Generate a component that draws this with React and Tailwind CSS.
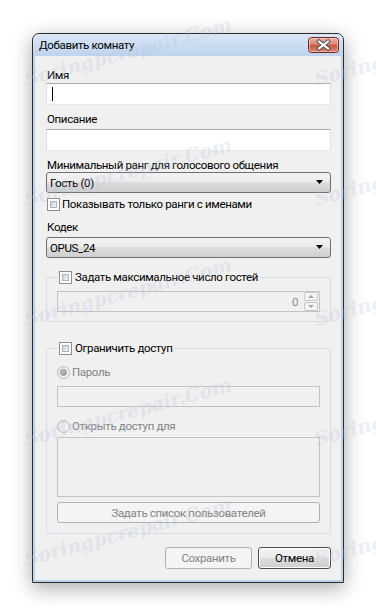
import React from "react";

function TextBox({ className = "", children }) {
  return (
    <div
      className={
        "border border-t-[#abadb3] border-x-[#dbdfe6] border-b-[#e3e9ef] bg-white " +
        className
      }
    >
      {children}
    </div>
  );
}

function Arrow() {
  return (
    <svg width="8" height="5" viewBox="0 0 8 5">
      <path d="M0 0 H7 L3.5 4 Z" fill="#000" />
    </svg>
  );
}

function Combo({ value }) {
  return (
    <div className="relative flex h-[21px] w-[285px] items-center justify-between rounded-[3px] border border-[#707070] bg-[linear-gradient(#f2f2f2_0%,#ebebeb_50%,#dddddd_50%,#cfcfcf_100%)] pl-[3px] pr-[6px]">
      <span>{value}</span>
      <Arrow />
    </div>
  );
}

function CheckBox() {
  return (
    <div className="h-[13px] w-[13px] shrink-0 border border-[#8f8f8f] bg-white p-[2px]">
      <div className="h-full w-full border border-[#aeb3b9] bg-gradient-to-br from-[#cbcfd5] to-[#f6f6f6]" />
    </div>
  );
}

function Radio({ checked }) {
  return (
    <div className="flex h-[13px] w-[13px] shrink-0 items-center justify-center rounded-full border border-[#b8b8b8] bg-gradient-to-br from-[#e4e4e4] to-[#f8f8f8]">
      {checked && (
        <div className="h-[7px] w-[7px] rounded-full border border-[#8c8c8c] bg-gradient-to-br from-[#c9c9c9] to-[#9a9a9a]" />
      )}
    </div>
  );
}

function CloseButton() {
  return (
    <svg width="31" height="16" viewBox="0 0 31 16">
      <defs>
        <linearGradient id="cg" x1="0" y1="0" x2="0" y2="1">
          <stop offset="0" stopColor="#eab3a6" />
          <stop offset="0.45" stopColor="#d98a78" />
          <stop offset="0.5" stopColor="#c6553d" />
          <stop offset="1" stopColor="#d98a76" />
        </linearGradient>
      </defs>
      <rect x="0.5" y="0.5" width="30" height="15" rx="3" fill="url(#cg)" stroke="#6d2a22" />
      <rect x="1.5" y="1.5" width="28" height="13" rx="2" fill="none" stroke="#f3c9bf" strokeOpacity="0.7" />
      <path d="M11 4.5 L20 11.5 M20 4.5 L11 11.5" stroke="#4a4a4a" strokeWidth="4" strokeLinecap="square" />
      <path d="M11 4.5 L20 11.5 M20 4.5 L11 11.5" stroke="#ffffff" strokeWidth="2.2" strokeLinecap="square" />
    </svg>
  );
}

function Spin() {
  return (
    <div className="flex flex-col gap-[1px] pr-[1px]">
      <div className="flex h-[9px] w-[14px] items-center justify-center rounded-[2px] border border-[#c6c6c6] bg-[#f4f4f4]">
        <svg width="6" height="3" viewBox="0 0 6 3"><path d="M0 3 H6 L3 0 Z" fill="#a8a8a8" /></svg>
      </div>
      <div className="flex h-[9px] w-[14px] items-center justify-center rounded-[2px] border border-[#c6c6c6] bg-[#f4f4f4]">
        <svg width="6" height="3" viewBox="0 0 6 3"><path d="M0 0 H6 L3 3 Z" fill="#a8a8a8" /></svg>
      </div>
    </div>
  );
}

const marks = [62, 182, 302, 422, 542];

export default function App() {
  return (
    <div className="relative min-h-[615px] w-[376px] overflow-hidden bg-white font-['Roboto',Arial,sans-serif] text-[11.5px] leading-[14px] tracking-[-0.35px] text-black">
      <div className="pl-[32px] pt-[33px]">
        <div className="flex h-[550px] w-[312px] flex-col rounded-t-[7px] rounded-b-[1px] border border-[#2c2c2c] bg-[#bcd3ee] shadow-[0_5px_20px_rgba(0,0,0,0.35)]">
          {/* title bar */}
          <div className="flex h-[22px] items-start justify-between rounded-t-[6px] bg-gradient-to-b from-[#dbe7f5] to-[#bdd3ed] pl-[6px] pr-[4px]">
            <span className="pt-[4px]">Добавить комнату</span>
            <div className="pt-[3px]">
              <CloseButton />
            </div>
          </div>

          {/* content */}
          <div className="mx-[2px] mb-[2px] flex flex-1 flex-col bg-[#f0f0f0] pl-[11px]">
            <div className="mt-[12px] pl-[1px]">Имя</div>
            <TextBox className="mt-[1px] flex h-[22px] w-[285px] items-center pl-[5px]">
              <div className="h-[14px] w-[1px] bg-black" />
            </TextBox>

            <div className="mt-[7px] pl-[1px]">Описание</div>
            <TextBox className="mt-[3px] h-[22px] w-[285px]" />

            <div className="mt-[7px] pl-[1px]">Минимальный ранг для голосового общения</div>
            <Combo value="Гость (0)" />

            <div className="mt-[4px] flex items-center gap-[2px] pl-[1px]">
              <CheckBox />
              <span>Показывать только ранги с именами</span>
            </div>

            <div className="mt-[9px] pl-[1px]">Кодек</div>
            <div className="mt-[3px]">
              <Combo value="OPUS_24" />
            </div>

            <fieldset className="mt-[12px] w-[285px] rounded-[3px] border border-[#d5dfe5] px-[10px] pb-[9px]">
              <legend className="flex items-center gap-[3px] px-[2px]">
                <CheckBox />
                <span>Задать максимальное число гостей</span>
              </legend>
              <div className="mt-[7px] flex h-[21px] items-center justify-end gap-[6px] border border-[#c4c4c4] bg-[#f0f0f0]">
                <span className="text-[#8a8a8a]">0</span>
                <Spin />
              </div>
            </fieldset>

            <fieldset className="mt-[19px] w-[285px] rounded-[3px] border border-[#d5dfe5] px-[10px] pb-[10px]">
              <legend className="flex items-center gap-[3px] px-[2px]">
                <CheckBox />
                <span>Ограничить доступ</span>
              </legend>
              <div className="mt-[10px] flex items-center gap-[2px] text-[#838383]">
                <Radio checked />
                <span>Пароль</span>
              </div>
              <div className="mt-[7px] h-[21px] border border-[#c4c4c4] bg-[#f0f0f0]" />
              <div className="mt-[12px] flex items-center gap-[2px] text-[#838383]">
                <Radio />
                <span>Открыть доступ для</span>
              </div>
              <div className="mt-[4px] h-[60px] border border-[#c4c4c4] bg-[#f0f0f0]" />
              <div className="mt-[5px] flex h-[21px] items-center justify-center rounded-[3px] border border-[#adb2b5] bg-[#f4f4f4] text-[#838383]">
                Задать список пользователей
              </div>
            </fieldset>

            <div className="mt-[13px] flex w-[285px] justify-end gap-[6px]">
              <div className="flex h-[22px] w-[87px] items-center justify-center rounded-[3px] border border-[#adb2b5] bg-[#f4f4f4] text-[#838383]">
                Сохранить
              </div>
              <div className="flex h-[22px] w-[73px] items-center justify-center rounded-[3px] border border-[#4d4d4d] bg-[linear-gradient(#f2f2f2_0%,#ebebeb_50%,#dddddd_50%,#cfcfcf_100%)] shadow-[inset_0_0_0_1px_#fcfcfc]">
                Отмена
              </div>
            </div>
          </div>
        </div>
      </div>

      {/* watermarks */}
      {marks.map((y) => (
        <React.Fragment key={y}>
          <span
            className="pointer-events-none absolute left-[25px] origin-left -rotate-[15deg] whitespace-nowrap font-['DejaVu_Serif',serif] text-[19px] font-bold italic tracking-normal text-[#b4c2dc] opacity-25"
            style={{ top: y + 10 }}
          >
            Soringpcrepair.Com
          </span>
          <span
            className="pointer-events-none absolute left-[315px] origin-left -rotate-[15deg] whitespace-nowrap font-['DejaVu_Serif',serif] text-[19px] font-bold italic tracking-normal text-[#b4c2dc] opacity-25"
            style={{ top: y + 10 }}
          >
            Soring
          </span>
        </React.Fragment>
      ))}
    </div>
  );
}
